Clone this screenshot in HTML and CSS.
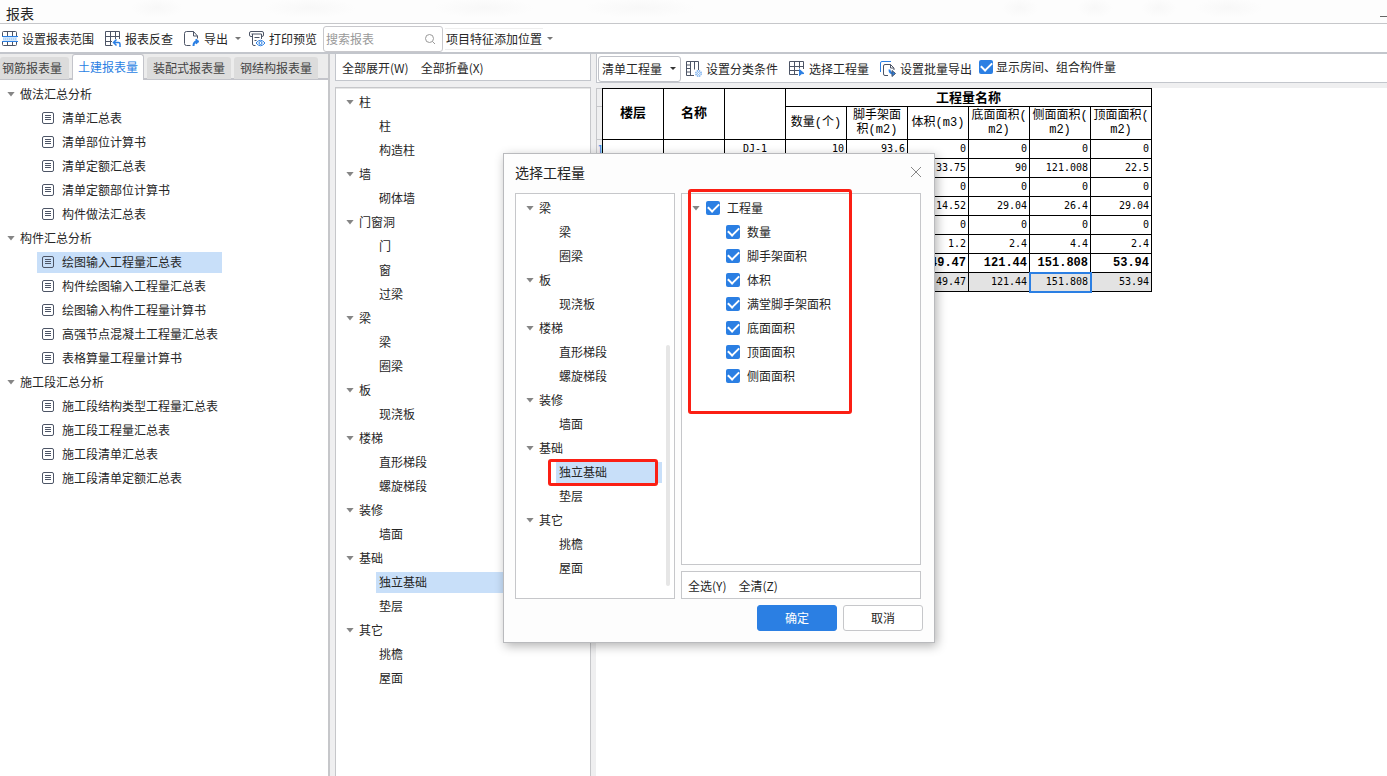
FILE: index.html
```html
<!DOCTYPE html>
<html lang="zh-CN">
<head>
<meta charset="utf-8">
<title>报表</title>
<link rel="stylesheet" href="styles.css">
</head>
<body>
<svg class="defs" aria-hidden="true">
  <symbol id="doc" viewBox="0 0 12 12"><rect x="0.5" y="0.5" width="11" height="11" rx="1.5" fill="none" stroke="currentColor"/><path d="M3 3.500h6M3 5.500h6M3 7.500h6" stroke="currentColor" fill="none"/></symbol>
</svg>
<div class="app">
  <header class="titlebar">
    <h1>报表</h1>
    <button class="minimize" aria-label="最小化"></button>
  </header>

  <nav class="toolbar">
    <button class="tool"><svg class="icon" viewBox="0 0 16 16" fill="none" stroke="#4d5566"><rect x="1" y="6" width="14" height="4" fill="#cfe5fb" stroke="none"/><path d="M.5 5V1.500Q.500.500 1.500.500h12q1 0 1 1V5M5.500.500V5M10.500.500V5M.5 11v2.500q0 1 1 1h12q1 0 1-1V11M5.500 11v3.500M10.500 11v3.500"/><path d="M0 5.500h16M0 10.500h16" stroke="#2b7fe3"/><path d="M1 8h14" stroke="#8abdf2" stroke-dasharray="1 1"/></svg>设置报表范围</button>
    <button class="tool"><svg class="icon" viewBox="0 0 16 16" fill="none" stroke="#4d5566"><path d="M14.500 8V.500H.500V14.500h7M5.500.500v14M10.500.500v7.500M.500 5.500h14M.500 10.500h6.500"/><path d="M9 11.500h4.500q1.500 0 1.500 1.500v3M11.500 8.500l-3 3 3 3" stroke="#2b7fe3" stroke-width="1.500"/></svg>报表反查</button>
    <button class="tool export"><svg class="icon" viewBox="0 0 16 16" fill="none" stroke="#4d5566"><path d="M6.500 14.500H2.500q-2 0-2-2v-10q0-2 2-2h7l4 4.500v2.500M9.500.500v4.500h4"/><path d="M9.500 15q0-4 3-4.500" stroke="#2b7fe3" stroke-width="2"/><path d="M12 8l3 2.500-3 2.500z" fill="#2b7fe3" stroke="#2b7fe3"/></svg>导出<i class="drop"></i></button>
    <button class="tool"><svg class="icon" viewBox="0 0 16 16" fill="none" stroke="#4d5566"><path d="M3 5.500H2q-1.500 0-1.500-1.500V2Q.500.500 2 .500h11q1.500 0 1.500 1.500V4q0 1.500-1.500 1.500M2.500 3h10M3.500 3v10q0 1.500 1.500 1.500h1.500M12.500 3v5M5.500 6.500h5M5.500 9.500h2"/><path d="M7 12q4.500-5.500 9 0-4.500 5.500-9 0z" stroke="#2b7fe3"/><circle cx="11.500" cy="12" r="1.500" stroke="#2b7fe3"/></svg>打印预览</button>
    <div class="search"><input type="search" placeholder="搜索报表" aria-label="搜索报表"><svg viewBox="0 0 12 12" fill="none" stroke="#999"><circle cx="5.500" cy="5.500" r="4"/><path d="M8.500 8.500l2.500 2.500"/></svg></div>
    <button class="tool position"><span>项目特征添加位置</span><i class="drop"></i></button>
  </nav>

  <main class="workspace">
    <aside class="reports">
      <div class="tabs" role="tablist">
        <button role="tab">钢筋报表量</button>
        <button role="tab" class="active" aria-selected="true">土建报表量</button>
        <button role="tab">装配式报表量</button>
        <button role="tab">钢结构报表量</button>
      </div>
      <ul class="tree report-tree">
        <li><div class="group"><button class="caret" aria-label="折叠"></button>做法汇总分析</div>
          <ul>
            <li><span><svg><use href="#doc"/></svg>清单汇总表</span></li>
            <li><span><svg><use href="#doc"/></svg>清单部位计算书</span></li>
            <li><span><svg><use href="#doc"/></svg>清单定额汇总表</span></li>
            <li><span><svg><use href="#doc"/></svg>清单定额部位计算书</span></li>
            <li><span><svg><use href="#doc"/></svg>构件做法汇总表</span></li>
          </ul></li>
        <li><div class="group"><button class="caret" aria-label="折叠"></button>构件汇总分析</div>
          <ul>
            <li><span class="selected"><svg><use href="#doc"/></svg>绘图输入工程量汇总表</span></li>
            <li><span><svg><use href="#doc"/></svg>构件绘图输入工程量汇总表</span></li>
            <li><span><svg><use href="#doc"/></svg>绘图输入构件工程量计算书</span></li>
            <li><span><svg><use href="#doc"/></svg>高强节点混凝土工程量汇总表</span></li>
            <li><span><svg><use href="#doc"/></svg>表格算量工程量计算书</span></li>
          </ul></li>
        <li><div class="group"><button class="caret" aria-label="折叠"></button>施工段汇总分析</div>
          <ul>
            <li><span><svg><use href="#doc"/></svg>施工段结构类型工程量汇总表</span></li>
            <li><span><svg><use href="#doc"/></svg>施工段工程量汇总表</span></li>
            <li><span><svg><use href="#doc"/></svg>施工段清单汇总表</span></li>
            <li><span><svg><use href="#doc"/></svg>施工段清单定额汇总表</span></li>
          </ul></li>
      </ul>
    </aside>

    <section class="components">
      <div class="expand-bar"><button>全部展开(W)</button><button>全部折叠(X)</button></div>
      <ul class="tree component-tree">
        <li><div class="group"><button class="caret" aria-label="折叠"></button>柱</div><ul><li><span>柱</span></li><li><span>构造柱</span></li></ul></li>
        <li><div class="group"><button class="caret" aria-label="折叠"></button>墙</div><ul><li><span>砌体墙</span></li></ul></li>
        <li><div class="group"><button class="caret" aria-label="折叠"></button>门窗洞</div><ul><li><span>门</span></li><li><span>窗</span></li><li><span>过梁</span></li></ul></li>
        <li><div class="group"><button class="caret" aria-label="折叠"></button>梁</div><ul><li><span>梁</span></li><li><span>圈梁</span></li></ul></li>
        <li><div class="group"><button class="caret" aria-label="折叠"></button>板</div><ul><li><span>现浇板</span></li></ul></li>
        <li><div class="group"><button class="caret" aria-label="折叠"></button>楼梯</div><ul><li><span>直形梯段</span></li><li><span>螺旋梯段</span></li></ul></li>
        <li><div class="group"><button class="caret" aria-label="折叠"></button>装修</div><ul><li><span>墙面</span></li></ul></li>
        <li><div class="group"><button class="caret" aria-label="折叠"></button>基础</div><ul><li><span class="selected">独立基础</span></li><li><span>垫层</span></li></ul></li>
        <li><div class="group"><button class="caret" aria-label="折叠"></button>其它</div><ul><li><span>挑檐</span></li><li><span>屋面</span></li></ul></li>
      </ul>
    </section>

    <section class="sheet">
      <div class="sheet-bar">
        <div class="select"><select aria-label="工程量类型"><option>清单工程量</option><option>定额工程量</option></select><i class="drop"></i></div>
        <button class="tool"><svg class="icon" viewBox="0 0 16 16" fill="none" stroke="#4d5566"><path d="M8 14.500H.500V.500h12V9M4.500.500v14M8.500.500v8M.500 4h4M.500 7.500h4M.500 11h4"/><circle cx="12.500" cy="12.500" r="2.700" stroke="#7db2ef" stroke-width="1.500" stroke-dasharray="1.500 .6"/><circle cx="12.500" cy="12.500" r="1" stroke="#7db2ef"/></svg>设置分类条件</button>
        <button class="tool"><svg class="icon" viewBox="0 0 16 16" fill="none" stroke="#4d5566"><path d="M14.500 8V.500H.500V13.500h8.500M5.500.500v13M10.500.500v7M.500 5.500h14M.500 9.500h9.500"/><path d="M10.500 8.500l4.500 4-2.500.2-2 2z" fill="#2b7fe3" stroke="#2b7fe3"/></svg>选择工程量</button>
        <button class="tool"><svg class="icon" viewBox="0 0 16 16" fill="none" stroke="#4d5566"><path d="M.5 11V2Q.500.500 2 .500h9" stroke="#2b7fe3"/><path d="M8 14.500H5q-1.500 0-1.500-1.500V5q0-1.500 1.500-1.500h5.500l3.500 3.500v2M10.500 3.500V7H14"/><path d="M9.500 8.500q0 4 4 4" stroke="#2b7fe3" stroke-width="2"/><path d="M12 9.500l3.500 3-3.500 3z" fill="#2b7fe3"/></svg>设置批量导出</button>
        <label class="check"><input type="checkbox" checked>显示房间、组合构件量</label>
      </div>
      <div class="grid">
        <div class="row-heads"><span></span><span></span><span>1</span></div>
        <table>
          <colgroup><col span="9"></colgroup>
          <thead>
            <tr class="span-head"><th class="tall" rowspan="2">楼层</th><th class="tall" rowspan="2">名称</th><th rowspan="2"></th><th colspan="6">工程量名称</th></tr>
            <tr class="unit-head"><th>数量(个)</th><th>脚手架面<br>积(m2)</th><th>体积(m3)</th><th>底面面积(<br>m2)</th><th>侧面面积(<br>m2)</th><th>顶面面积(<br>m2)</th></tr>
          </thead>
          <tbody>
            <tr><td></td><td></td><td class="name">DJ-1</td><td>10</td><td>93.6</td><td>0</td><td>0</td><td>0</td><td>0</td></tr>
            <tr><td></td><td></td><td></td><td></td><td></td><td>33.75</td><td>90</td><td>121.008</td><td>22.5</td></tr>
            <tr><td></td><td></td><td></td><td></td><td></td><td>0</td><td>0</td><td>0</td><td>0</td></tr>
            <tr><td></td><td></td><td></td><td></td><td></td><td>14.52</td><td>29.04</td><td>26.4</td><td>29.04</td></tr>
            <tr><td></td><td></td><td></td><td></td><td></td><td>0</td><td>0</td><td>0</td><td>0</td></tr>
            <tr><td></td><td></td><td></td><td></td><td></td><td>1.2</td><td>2.4</td><td>4.4</td><td>2.4</td></tr>
            <tr class="subtotal"><td></td><td></td><td></td><td></td><td></td><td>49.47</td><td>121.44</td><td>151.808</td><td>53.94</td></tr>
            <tr class="total"><td></td><td></td><td></td><td></td><td></td><td>49.47</td><td>121.44</td><td class="active">151.808</td><td>53.94</td></tr>
          </tbody>
        </table>
      </div>
    </section>
  </main>
</div>

<div class="dialog" role="dialog" aria-labelledby="dialog-title">
  <div class="dialog-head">
    <h2 id="dialog-title">选择工程量</h2>
    <button class="close" aria-label="关闭"><svg viewBox="0 0 12 12" stroke="#888" fill="none"><path d="M1 1l10 10M11 1L1 11"/></svg></button>
  </div>
  <div class="dialog-body">
    <div class="pane picker">
      <ul class="tree">
        <li><div class="group"><button class="caret" aria-label="折叠"></button>梁</div><ul><li><span>梁</span></li><li><span>圈梁</span></li></ul></li>
        <li><div class="group"><button class="caret" aria-label="折叠"></button>板</div><ul><li><span>现浇板</span></li></ul></li>
        <li><div class="group"><button class="caret" aria-label="折叠"></button>楼梯</div><ul><li><span>直形梯段</span></li><li><span>螺旋梯段</span></li></ul></li>
        <li><div class="group"><button class="caret" aria-label="折叠"></button>装修</div><ul><li><span>墙面</span></li></ul></li>
        <li><div class="group"><button class="caret" aria-label="折叠"></button>基础</div><ul><li class="marked"><span class="selected">独立基础</span><i class="mark mark-item"></i></li><li><span>垫层</span></li></ul></li>
        <li><div class="group"><button class="caret" aria-label="折叠"></button>其它</div><ul><li><span>挑檐</span></li><li><span>屋面</span></li></ul></li>
      </ul>
      <i class="scroll-thumb"></i>
    </div>
    <div class="quantities">
      <div class="pane quantity-pane">
        <ul class="tree">
          <li><div class="group"><button class="caret" aria-label="折叠"></button><label class="check"><input type="checkbox" checked>工程量</label></div>
            <ul>
              <li><label class="check"><input type="checkbox" checked>数量</label></li>
              <li><label class="check"><input type="checkbox" checked>脚手架面积</label></li>
              <li><label class="check"><input type="checkbox" checked>体积</label></li>
              <li><label class="check"><input type="checkbox" checked>满堂脚手架面积</label></li>
              <li><label class="check"><input type="checkbox" checked>底面面积</label></li>
              <li><label class="check"><input type="checkbox" checked>顶面面积</label></li>
              <li><label class="check"><input type="checkbox" checked>侧面面积</label></li>
            </ul></li>
        </ul>
        <i class="mark mark-list"></i>
      </div>
      <div class="pane select-bar"><button>全选(Y)</button><button>全清(Z)</button></div>
    </div>
  </div>
  <div class="dialog-foot"><button class="btn primary">确定</button><button class="btn">取消</button></div>
</div>
</body>
</html>
```

FILE: styles.css
```css
* { box-sizing: border-box; }

body {
  margin: 0;
  overflow: hidden;
  background: #fff;
  color: #262626;
  font: 12px/16px "Noto Sans CJK SC", sans-serif;
}

button, input, select { font: inherit; color: inherit; }
button { margin: 0; padding: 0; border: 0; background: none; white-space: nowrap; }
ul { margin: 0; padding: 0; list-style: none; }
h1, h2 { margin: 0; font-weight: 400; font-size: 14px; line-height: 20px; }
.defs { display: none; }

.app { display: flex; flex-direction: column; height: 100vh; }

/* Title bar */
.titlebar {
  display: flex;
  justify-content: space-between;
  height: 24px;
  padding: 3px 0 0 6px;
  border-bottom: 1px solid #c6c7ca;
  background:
    radial-gradient(ellipse 26px 10px at 157px 8px, #f8f8f8, transparent),
    radial-gradient(ellipse 46px 10px at 310px 8px, #f8f8f8, transparent),
    radial-gradient(ellipse 50px 10px at 484px 8px, #f8f8f8, transparent),
    radial-gradient(ellipse 56px 10px at 640px 8px, #f8f8f8, transparent),
    radial-gradient(ellipse 18px 10px at 1020px 8px, #f8f8f8, transparent),
    radial-gradient(ellipse 18px 10px at 1095px 8px, #f8f8f8, transparent),
    radial-gradient(ellipse 18px 10px at 1159px 8px, #f8f8f8, transparent),
    radial-gradient(ellipse 34px 10px at 1229px 8px, #f8f8f8, transparent),
    #fdfdfd;
}
.minimize { width: 7px; height: 14px; border-bottom: 1px solid #666; }

/* Toolbars */
.toolbar {
  display: flex;
  align-items: center;
  height: 30px;
  padding: 1px 0 0 2px;
  border-bottom: 2px solid #c3c6cc;
}
.tool { display: flex; align-items: center; gap: 4px; margin-right: 11px; }
.icon { flex: none; width: 16px; height: 16px; }
.drop {
  flex: none;
  border: 3px solid transparent;
  border-top-color: #777;
  border-bottom: 0;
}
.export .drop { margin-left: 3px; }
.export { gap: 4px; margin-right: 8px; }
.search {
  display: flex;
  align-items: center;
  width: 120px;
  height: 26px;
  margin: 0 2px 0 -5px;
  padding: 0 6px 0 2px;
  border: 1px solid #c8c8cc;
  border-radius: 3px;
}
.search input { flex: 1; min-width: 0; padding: 0; border: 0; outline: 0; background: none; }
.search input::placeholder { color: #999; opacity: 1; }
.search svg { width: 12px; height: 12px; }
.position span { padding: 2px 1px; border: solid #eee; border-width: 1px 0; }

/* Workspace columns */
.workspace { flex: 1; display: flex; min-height: 0; background: #efeff0; }
.reports {
  flex: none;
  display: flex;
  flex-direction: column;
  width: 330px;
  margin-right: 5px;
  border-right: 2px solid #c6c7ca;
  background: #fff;
}
.tabs {
  display: flex;
  align-items: flex-end;
  gap: 3px;
  height: 26px;
  border-bottom: 2px solid #c3c4ca;
  background: #ececec;
}
.tabs button {
  height: 22px;
  margin-bottom: -1px;
  padding: 0 6px;
  border-radius: 3px 3px 0 0;
  background: #dcdcdc;
  color: #444;
}
.tabs button:first-child { padding: 0 7px 0 2px; }
.tabs .active {
  height: 26px;
  margin-bottom: -2px;
  padding: 0 5px 2px;
  border: 1px solid #c3c4ca;
  border-bottom: 0;
  background: #fff;
  color: #2b7fe3;
}

/* Trees */
.group { display: flex; align-items: center; height: 24px; }
.tree { white-space: nowrap; }
.tree ul > li { display: flex; align-items: center; height: 24px; }
.caret {
  width: 8px;
  height: 5px;
  margin-right: 5px;
  background: #858585;
  clip-path: polygon(0 0, 100% 0, 50% 100%);
}
.tree span { display: flex; align-items: center; height: 21px; padding: 0 3px; }
.tree .selected { background: #c8dff9; }
.tree svg { flex: none; width: 12px; height: 12px; margin-right: 8px; color: #4d5566; }
.report-tree { padding: 2px 0 0 7px; }
.report-tree ul { padding-left: 30px; }
.report-tree ul span { width: 185px; padding: 0 5px; }

.components {
  flex: none;
  display: flex;
  flex-direction: column;
  gap: 6px;
  width: 256px;
  margin-right: 5px;
}
.expand-bar {
  display: flex;
  gap: 12px;
  height: 27px;
  padding-left: 6px;
  border: 1px solid #c3c6cc;
  border-top: 0;
  background: #fff;
}
.expand-bar button { padding-top: 2px; }
.component-tree {
  flex: 1;
  padding: 2px 0 0 10px;
  border: 1px solid #c6c7ca;
  border-bottom: 0;
  background: #fff;
  box-shadow: inset 0 1px #e6e6e6;
}
.component-tree ul { padding-left: 30px; }
.component-tree .selected { width: 200px; }

/* Quantity sheet */
.sheet { flex: 1; display: flex; flex-direction: column; min-width: 0; gap: 5px; }
.sheet-bar {
  display: flex;
  align-items: center;
  height: 29px;
  padding: 1px 0 0 1px;
  border-bottom: 1px solid #c3c6cc;
  border-left: 1px solid #c3c6cc;
  background: #fff;
}
.select {
  display: flex;
  align-items: center;
  width: 83px;
  height: 26px;
  margin-right: 5px;
  padding: 0 4px 0 3px;
  border: 1px solid #c0c2c8;
  border-radius: 3px;
}
.select select { flex: 1; min-width: 0; padding: 0; border: 0; background: none; appearance: none; }
.select .drop { border-top-color: #333; }
.check { display: flex; align-items: center; gap: 7px; white-space: nowrap; }
.check input {
  flex: none;
  display: grid;
  place-items: center;
  width: 14px;
  height: 14px;
  margin: 0;
  border-radius: 2px;
  background: #2b7fe3;
  appearance: none;
}
.check input:checked::before {
  content: "";
  width: 9px;
  height: 5px;
  margin-bottom: 3px;
  border: solid #fff;
  border-width: 0 0 2px 2px;
  transform: rotate(-45deg);
}
.sheet-bar .check { gap: 3px; margin: 0 0 4px -4px; }
.grid { flex: 1; display: flex; align-items: flex-start; background: #fff; }
.row-heads { width: 6px; background: #efeff0; border-left: 1px solid #c6c7ca; color: #2b7fe3; }
.row-heads span { display: block; height: 19px; border-top: 1px solid #c6c7ca; line-height: 18px; }
.row-heads span:nth-child(1) { height: 18px; }
.row-heads span:nth-child(2) { height: 33px; }

table {
  table-layout: fixed;
  width: 550px;
  border-collapse: collapse;
  color: #000;
}
th, td { padding: 0; border: 1px solid #000; }
th { font-size: 13px; line-height: 14px; }
tr { height: 19px; }
.span-head { height: 18px; }
.span-head th { padding-bottom: 2px; }
.span-head .tall { padding-bottom: 4px; }
.unit-head { height: 33px; }
.unit-head th { font: 12px/14px "Liberation Mono", "Noto Sans CJK SC", monospace; }
td {
  padding-right: 2px;
  text-align: right;
  font: 10px/14px "DejaVu Sans Mono", monospace;
}
td.name { padding: 0; text-align: center; }
.subtotal td { font: bold 12px/14px "Liberation Mono", monospace; }
.total { background: #e3e3e3; }
.total .active { outline: 2px solid #2b7fe3; outline-offset: -1px; }

/* Dialog */
.dialog {
  position: absolute;
  top: 153px;
  left: 503px;
  display: flex;
  flex-direction: column;
  width: 432px;
  padding: 8px 11px 11px;
  border: 1px solid #b9babd;
  background: #fdfdfd;
  box-shadow: 2px 3px 10px rgba(0, 0, 0, .3);
}
.dialog-head { display: flex; justify-content: space-between; height: 31px; }
.close { width: 14px; height: 20px; }
.close svg { display: block; width: 14px; height: 12px; }
.dialog-body { display: grid; grid-template-columns: 160px 240px; gap: 6px; }
.pane { border: 1px solid #c6c7ca; background: #fff; }
.picker { position: relative; padding: 2px 0 18px 10px; }
.picker ul ul { padding-left: 30px; }
.picker .selected { width: 106px; }
.scroll-thumb {
  position: absolute;
  right: 4px;
  bottom: 12px;
  width: 4px;
  height: 241px;
  border-radius: 2px;
  background: #e6e6e6;
}
.quantities { display: flex; flex-direction: column; gap: 6px; }
.quantity-pane { position: relative; flex: 1; padding: 2px 0 0 10px; }
.quantity-pane .caret { margin-right: 6px; }
.quantity-pane ul ul { padding-left: 34px; }
.select-bar { display: flex; gap: 12px; height: 28px; padding: 2px 0 0 6px; }
.marked { position: relative; }
.mark { position: absolute; border: 3px solid #fb1f14; border-radius: 3px; pointer-events: none; }
.mark-item { left: -8px; top: -1px; width: 110px; height: 27px; }
.mark-list { left: 6px; top: -5px; width: 164px; height: 225px; }
.dialog-foot { display: flex; justify-content: flex-end; gap: 6px; margin-top: 6px; }
.btn {
  width: 80px;
  height: 26px;
  border: 1px solid #c6c7ca;
  border-radius: 3px;
  background: #fff;
}
.primary { border-color: #2b7fe3; background: #2b7fe3; color: #fff; }
```
